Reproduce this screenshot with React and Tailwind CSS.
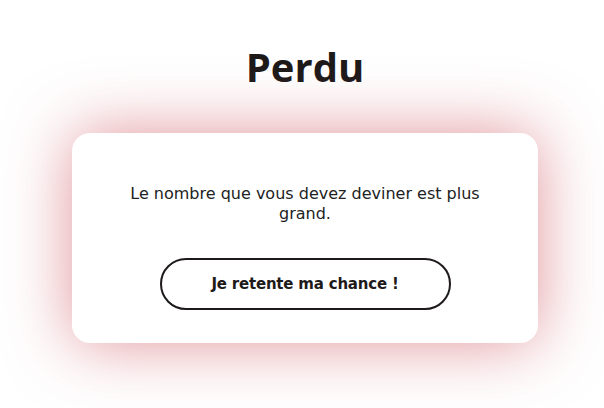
export default function App() {
  return (
    <div className="w-[604px] h-[408px] bg-white flex flex-col items-center pl-[6px] overflow-hidden">
      <h1 className="mt-[42px] text-[40px] leading-[50px] font-bold text-[#1e1a1a] font-['Open_Sans',sans-serif] tracking-[0px]">
        Perdu
      </h1>
      <div className="mt-[41px] w-[466px] h-[210px] bg-white rounded-[18px] shadow-[0_0_65px_0_rgba(205,80,90,0.62)] flex flex-col items-center pt-[51px]">
        <p className="w-[380px] text-center text-[16px] leading-[20px] text-[#222] font-['DejaVu_Sans',sans-serif]">
          Le nombre que vous devez deviner est plus
          <br />
          grand.
        </p>
        <button className="mt-[34px] w-[291px] h-[52px] rounded-full border-2 border-[#1e1a1a] text-[15px] font-bold text-[#1e1a1a] font-['DejaVu_Sans',sans-serif] tracking-[-0.2px]">
          Je retente ma chance !
        </button>
      </div>
    </div>
  );
}
